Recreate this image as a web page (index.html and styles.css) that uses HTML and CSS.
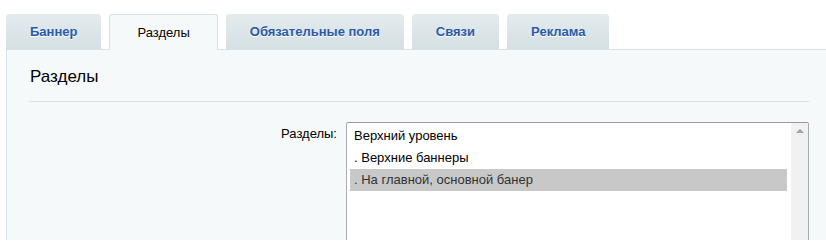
FILE: index.html
```html
<!DOCTYPE html>
<html lang="ru">
<head>
    <meta charset="UTF-8">
    <meta name="viewport" content="width=device-width, initial-scale=1.0">
    <title>Разделы</title>
    <link rel="stylesheet" href="styles.css">
</head>
<body>
    <div class="tabs">
        <a class="tab" href="#">Баннер</a>
        <a class="tab active" href="#">Разделы</a>
        <a class="tab" href="#">Обязательные поля</a>
        <a class="tab" href="#">Связи</a>
        <a class="tab" href="#">Реклама</a>
    </div>
    <div class="panel">
        <h2 class="panel-title">Разделы</h2>
        <div class="field-row">
            <label class="field-label">Разделы:</label>
            <div class="listbox">
                <div class="options">
                    <div class="option">Верхний уровень</div>
                    <div class="option">. Верхние баннеры</div>
                    <div class="option selected">. На главной, основной банер</div>
                </div>
                <div class="scrollbar">
                    <span class="arrow-up"></span>
                </div>
            </div>
        </div>
    </div>
</body>
</html>
```

FILE: styles.css
```css
body {
    font-family: "Liberation Sans", Arial, sans-serif;
    font-size: 13px;
    margin: 14px 0 0 6px;
    background: #fff;
    color: #000;
    overflow: hidden;
}
.tabs {
    display: flex;
    gap: 8px;
    height: 35px;
    position: relative;
    z-index: 1;
}
.tab {
    display: flex;
    align-items: center;
    padding: 0 24px;
    height: 35px;
    box-sizing: border-box;
    border-radius: 3px 3px 0 0;
    background: linear-gradient(#e3ebee, #d5e0e4);
    color: #2a5aa6;
    font-weight: bold;
    text-decoration: none;
    text-shadow: 0 1px #fff;
}
.tab.active {
    background: #f5f9f9;
    color: #000;
    font-weight: normal;
    border: 1px solid #d7e2e8;
    border-bottom: none;
    height: 36px;
    padding: 0 27px 1px;
}
.panel {
    background: #f5f9f9;
    border-top: 1px solid #d7e2e8;
    border-left: 1px solid #d7e2e8;
    padding: 0 17px 0 22px;
    height: 190px;
}
.panel-title {
    font-size: 17px;
    font-weight: normal;
    margin: 0;
    padding: 17px 0 14px 1px;
    border-bottom: 1px solid #dde2e5;
}
.field-row {
    display: flex;
    margin-top: 20px;
}
.field-label {
    width: 308px;
    flex: none;
    text-align: right;
    padding-top: 4px;
    color: #000;
}
.listbox {
    margin-left: 9px;
    flex: 1;
    display: flex;
    height: 150px;
    background: #fff;
    border: 1px solid #a8acae;
    border-top-color: #999;
    border-radius: 2px;
}
.options {
    flex: 1;
    padding: 2px 4px 0 3px;
}
.option {
    height: 22px;
    line-height: 22px;
    padding-left: 4px;
    color: #000;
}
.option.selected {
    background: #c8c8c8;
    color: #333;
}
.scrollbar {
    width: 17px;
    background: #f1f1f1;
    display: flex;
    justify-content: center;
}
.arrow-up {
    margin-top: 6px;
    width: 0;
    height: 0;
    border-left: 4px solid transparent;
    border-right: 4px solid transparent;
    border-bottom: 4px solid #a3a3a3;
}
```
